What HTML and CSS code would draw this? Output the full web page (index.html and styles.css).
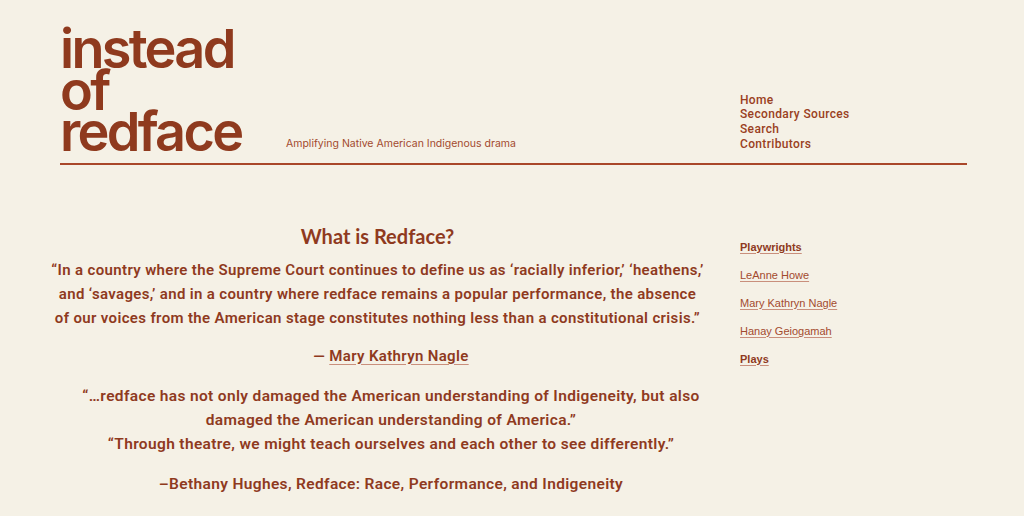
FILE: index.html
```html
<!DOCTYPE html>
<html lang="en">
<head>
<meta charset="utf-8">
<title>instead of redface</title>
<link rel="stylesheet" href="styles.css">
</head>
<body>
<header class="site-header">
  <div class="brand">
    <a class="logo" href="#">instead<br>of<br>redface</a>
    <p class="tagline">Amplifying Native American Indigenous drama</p>
  </div>
  <nav class="main-nav">
    <a href="#">Home</a>
    <a href="#">Secondary Sources</a>
    <a href="#">Search</a>
    <a href="#">Contributors</a>
  </nav>
</header>
<div class="page">
  <main class="content">
    <h1 class="title">What is Redface?</h1>
    <p class="quote">“In a country where the Supreme Court continues to define us as ‘racially inferior,’ ‘heathens,’ and ‘savages,’ and in a country where redface remains a popular performance, the absence of our voices from the American stage constitutes nothing less than a constitutional crisis.”</p>
    <div class="more">
      <p class="attrib">— <a href="#">Mary Kathryn Nagle</a></p>
      <p class="quote quote-last">“…redface has not only damaged the American understanding of Indigeneity, but also damaged the American understanding of America.”<br>“Through theatre, we might teach ourselves and each other to see differently.”</p>
      <p class="attrib attrib-last">–Bethany Hughes, Redface: Race, Performance, and Indigeneity</p>
    </div>
  </main>
  <aside class="sidebar">
    <a class="strong" href="#">Playwrights</a>
    <a href="#">LeAnne Howe</a>
    <a href="#">Mary Kathryn Nagle</a>
    <a href="#">Hanay Geiogamah</a>
    <a class="strong" href="#">Plays</a>
  </aside>
</div>
</body>
</html>
```
FILE: styles.css
```css
* { box-sizing: border-box; }
html, body { margin: 0; padding: 0; }
body {
  background: #f5f1e6;
  color: #8f3a1e;
  font-family: "Inter", "Liberation Sans", sans-serif;
  width: 1024px;
  height: 516px;
  overflow: hidden;
}
a { color: inherit; }

.site-header {
  margin: 0 57px 0 60px;
  padding-top: 20px;
  padding-bottom: 10px;
  border-bottom: 2px solid #a9472a;
  display: flex;
  align-items: flex-end;
}
.brand {
  display: flex;
  align-items: flex-end;
  width: 680px;
}
.logo {
  display: block;
  text-decoration: none;
  font-family: "Inter", sans-serif;
  font-weight: 600;
  font-size: 54px;
  line-height: 41.5px;
  letter-spacing: -2.7px;
  padding-top: 8px;
  width: 226px;
}
.tagline {
  margin: 0 0 3px;
  font-family: "Inter", "Liberation Sans", sans-serif;
  font-size: 10.5px;
  color: #a34a2e;
  letter-spacing: 0;
}
.main-nav {
  display: flex;
  flex-direction: column;
  font-family: "Roboto", sans-serif;
  font-weight: 500;
  font-size: 12px;
  line-height: 14.7px;
  letter-spacing: 0.35px;
  padding-bottom: 1px;
}
.main-nav a { text-decoration: none; color: #9a3f22; }

.page {
  display: flex;
  padding: 0 0 0 50px;
}
.content {
  width: 655px;
  text-align: center;
  padding-top: 59px;
  font-family: "Roboto", sans-serif;
  font-weight: 600;
}
.title {
  font-family: "Lato", sans-serif;
  font-weight: 700;
  font-size: 20px;
  margin: 0 0 10px;
}
.quote {
  font-size: 15px;
  letter-spacing: 0.35px;
  line-height: 24px;
  margin: 0 0 14px;
}
.more { padding-left: 27px; }
.quote-last { margin-bottom: 16px; font-size: 15.5px; }
.attrib {
  font-size: 15px;
  letter-spacing: 0.35px;
  line-height: 24px;
  margin: 0 0 16px;
}
.attrib-last { font-size: 15.5px; }
.attrib a { text-decoration-color: #c98f7c; text-underline-offset: 3px; }

.sidebar {
  margin-left: 35px;
  padding-top: 75px;
  display: flex;
  flex-direction: column;
  align-items: flex-start;
  gap: 14px;
  font-family: "Liberation Sans", sans-serif;
  font-size: 11px;
  line-height: 14px;
}
.sidebar a { color: #a34a2e; text-underline-offset: 2px; text-decoration-color: #c98f7c; }
.sidebar a.strong { font-weight: 700; color: #8f3a1e; }
```
